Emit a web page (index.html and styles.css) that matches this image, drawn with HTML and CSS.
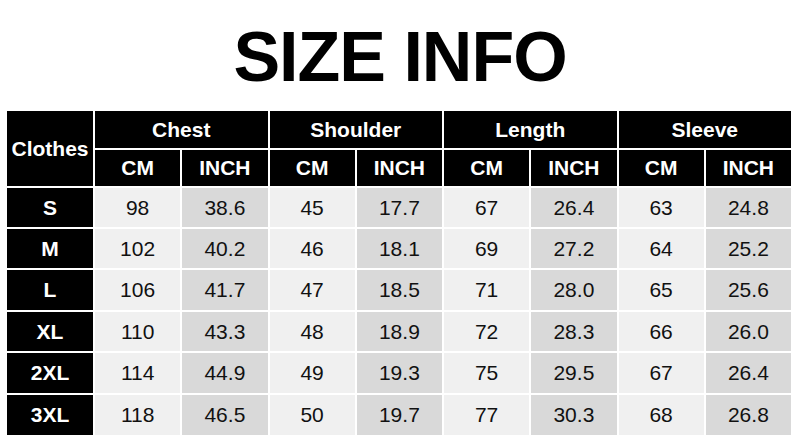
FILE: index.html
```html
<!DOCTYPE html>
<html>
<head>
<meta charset="utf-8">
<link rel="stylesheet" href="styles.css">
</head>
<body>
<h1 class="title">SIZE INFO</h1>
<div class="chart">
  <div class="hd clothes">Clothes</div>
  <div class="hd group">Chest</div>
  <div class="hd group">Shoulder</div>
  <div class="hd group">Length</div>
  <div class="hd group">Sleeve</div>
  <div class="hd">CM</div><div class="hd">INCH</div>
  <div class="hd">CM</div><div class="hd">INCH</div>
  <div class="hd">CM</div><div class="hd">INCH</div>
  <div class="hd">CM</div><div class="hd">INCH</div>

  <div class="hd size">S</div>
  <div class="cm">98</div><div class="in">38.6</div>
  <div class="cm">45</div><div class="in">17.7</div>
  <div class="cm">67</div><div class="in">26.4</div>
  <div class="cm">63</div><div class="in">24.8</div>

  <div class="hd size">M</div>
  <div class="cm">102</div><div class="in">40.2</div>
  <div class="cm">46</div><div class="in">18.1</div>
  <div class="cm">69</div><div class="in">27.2</div>
  <div class="cm">64</div><div class="in">25.2</div>

  <div class="hd size">L</div>
  <div class="cm">106</div><div class="in">41.7</div>
  <div class="cm">47</div><div class="in">18.5</div>
  <div class="cm">71</div><div class="in">28.0</div>
  <div class="cm">65</div><div class="in">25.6</div>

  <div class="hd size">XL</div>
  <div class="cm">110</div><div class="in">43.3</div>
  <div class="cm">48</div><div class="in">18.9</div>
  <div class="cm">72</div><div class="in">28.3</div>
  <div class="cm">66</div><div class="in">26.0</div>

  <div class="hd size">2XL</div>
  <div class="cm">114</div><div class="in">44.9</div>
  <div class="cm">49</div><div class="in">19.3</div>
  <div class="cm">75</div><div class="in">29.5</div>
  <div class="cm">67</div><div class="in">26.4</div>

  <div class="hd size">3XL</div>
  <div class="cm">118</div><div class="in">46.5</div>
  <div class="cm">50</div><div class="in">19.7</div>
  <div class="cm">77</div><div class="in">30.3</div>
  <div class="cm">68</div><div class="in">26.8</div>
</div>
</body>
</html>
```

FILE: styles.css
```css
html, body {
  margin: 0;
  padding: 0;
  background: #ffffff;
}
body {
  width: 800px;
  height: 443px;
  overflow: hidden;
  font-family: "Liberation Sans", Arial, sans-serif;
}
.title {
  margin: 0;
  padding-top: 22px;
  height: 111px;
  font-size: 70px;
  line-height: 70px;
  font-weight: bold;
  letter-spacing: -1px;
  text-align: center;
  color: #000;
  box-sizing: border-box;
}
.chart {
  margin-left: 7px;
  width: 784px;
  display: grid;
  grid-template-columns: 86px repeat(8, 1fr);
  grid-template-rows: 37px 36px 39px 39px 40px 39px 40px 40px;
  gap: 2px;
}
.chart > div {
  display: flex;
  align-items: center;
  justify-content: center;
  font-size: 21px;
}
.hd {
  background: #000;
  color: #fff;
  font-weight: bold;
}
.clothes {
  grid-row: span 2;
}
.group {
  grid-column: span 2;
}
.cm {
  background: #f0f0f0;
  color: #111;
}
.in {
  background: #d9d9d9;
  color: #111;
}
```
